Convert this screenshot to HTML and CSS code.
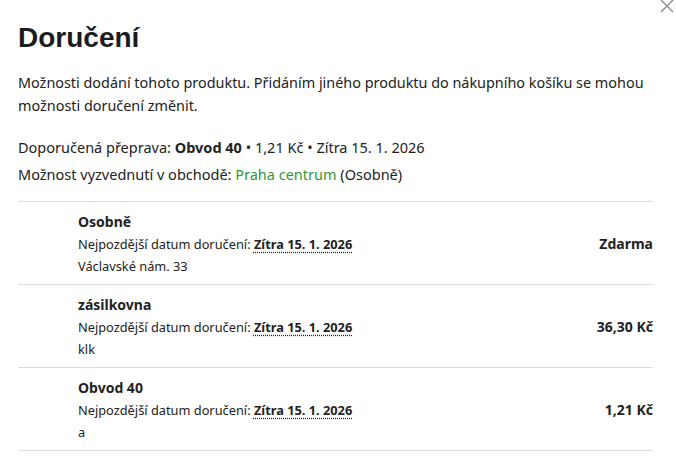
FILE: index.html
```html
<!DOCTYPE html>
<html lang="cs">
<head>
<meta charset="utf-8">
<title>Doručení</title>
<link rel="stylesheet" href="styles.css">
</head>
<body>
<div class="modal">
  <button class="close" aria-label="Zavřít">
    <svg width="14" height="14" viewBox="0 0 14 14"><path d="M1 1L13 13M13 1L1 13" stroke="#8a8a8a" stroke-width="1.4" fill="none"/></svg>
  </button>
  <h1 class="title">Doručení</h1>
  <p class="intro">Možnosti dodání tohoto produktu. Přidáním jiného produktu do nákupního košíku se mohou možnosti doručení změnit.</p>
  <div class="summary">
    <div>Doporučená přeprava: <strong>Obvod 40</strong> • 1,21 Kč • Zítra 15. 1. 2026</div>
    <div>Možnost vyzvednutí v obchodě: <a class="link" href="#">Praha centrum</a> (Osobně)</div>
  </div>
  <ul class="options">
    <li class="option">
      <div class="thumb"></div>
      <div class="info">
        <div class="name">Osobně</div>
        <div>Nejpozdější datum doručení: <span class="date">Zítra 15. 1. 2026</span></div>
        <div>Václavské nám. 33</div>
      </div>
      <div class="price">Zdarma</div>
    </li>
    <li class="option">
      <div class="thumb"></div>
      <div class="info">
        <div class="name">zásilkovna</div>
        <div>Nejpozdější datum doručení: <span class="date">Zítra 15. 1. 2026</span></div>
        <div>klk</div>
      </div>
      <div class="price">36,30 Kč</div>
    </li>
    <li class="option">
      <div class="thumb"></div>
      <div class="info">
        <div class="name">Obvod 40</div>
        <div>Nejpozdější datum doručení: <span class="date">Zítra 15. 1. 2026</span></div>
        <div>a</div>
      </div>
      <div class="price">1,21 Kč</div>
    </li>
  </ul>
</div>
</body>
</html>
```
FILE: styles.css
```css
* { box-sizing: border-box; }
html, body { margin: 0; padding: 0; background: #fff; }
body {
  font-family: "Noto Sans", "Open Sans", sans-serif;
  color: #222;
}
.modal {
  position: relative;
  padding: 22px 23px 0 18px;
}
.close {
  position: absolute;
  top: -1px;
  right: 2px;
  border: 0;
  background: none;
  padding: 0;
  width: 14px;
  height: 14px;
  cursor: pointer;
}
.close svg { display: block; }
.title {
  font-family: "Liberation Sans", Arial, sans-serif;
  font-weight: 700;
  font-size: 28px;
  line-height: 32px;
  margin: 0;
  color: #1c1c1c;
}
.intro {
  font-size: 14.4px;
  line-height: 23px;
  margin: 17px 0 0;
}
.summary {
  font-size: 14.5px;
  line-height: 27px;
  margin: 17px 0 0;
}
.summary > div { height: 27px; }
.summary strong { font-weight: 700; }
.link { color: #2f9a35; text-decoration: none; }
.options {
  list-style: none;
  margin: 13px 0 0;
  padding: 0;
  border-top: 1px solid #dcdcdc;
}
.option {
  display: flex;
  align-items: center;
  border-bottom: 1px solid #dcdcdc;
  padding: 9px 0 7px;
  height: 83px;
  font-size: 12.8px;
  line-height: 22px;
}
.info > div { height: 22px; }
.thumb { width: 60px; flex: none; align-self: stretch; }
.info { flex: 1; }
.name { font-weight: 700; font-size: 14px; }
.date {
  font-weight: 700;
  text-decoration: underline dotted;
  text-underline-offset: 3px;
}
.price { font-weight: 700; font-size: 14px; }
```
